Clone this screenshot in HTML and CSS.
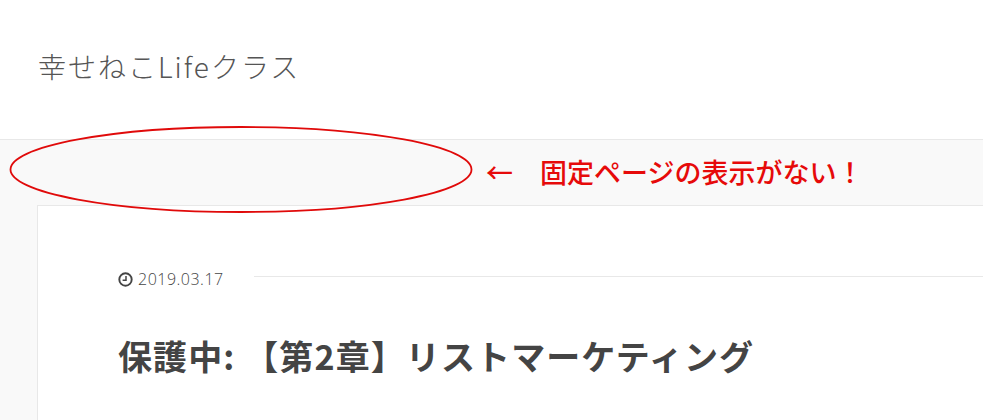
FILE: index.html
```html
<!DOCTYPE html>
<html lang="ja">
  <head>
    <meta charset="utf-8">
    <link rel="stylesheet" href="styles.css">
  </head>
  <body>
    <header class="site-header">
      <h1 class="site-title">幸せねこLifeクラス</h1>
    </header>
    <main class="content">
      <article class="card">
        <div class="post-meta">
          <span class="post-date">
            <svg class="clock" viewBox="0 0 15 15" width="15" height="15">
              <circle cx="7.5" cy="7.5" r="6.2" fill="none" stroke="#444" stroke-width="1.9"/>
              <path d="M8 4V8.2H4.6" fill="none" stroke="#444" stroke-width="1.5"/>
            </svg>
            2019.03.17
          </span>
          <span class="post-rule"></span>
        </div>
        <h2 class="post-title">保護中: 【第2章】リストマーケティング</h2>
      </article>
    </main>

    <!-- red annotation drawn over the screenshot -->
    <svg class="note-ring" viewBox="0 0 983 420" width="983" height="420">
      <ellipse cx="241" cy="169.5" rx="230.5" ry="42.5" fill="none" stroke="#e00a0a" stroke-width="1.8"/>
    </svg>
    <div class="note-text"><span class="note-arrow">←</span>固定ページの表示がない！</div>
  </body>
</html>
```

FILE: styles.css
```css
body {
  font-family: "Open Sans", "Noto Sans CJK JP", sans-serif;
  margin: 0;
  padding: 0;
  height: 420px;
  overflow: hidden;
  background-color: #f9f9f9;
  color: #444;
}

.site-header {
  background-color: #fff;
  border-bottom: 1px solid #e8e8e8;
  height: 139px;
  padding-left: 38px;
}

.site-title {
  margin: 0;
  padding-top: 46px;
  font-family: "Noto Sans CJK JP", sans-serif;
  font-size: 28px;
  line-height: 40px;
  font-weight: 300;
  letter-spacing: 2px;
  color: #555;
}

.content {
  padding: 65px 0 0 37px;
}

.card {
  background-color: #fff;
  border: 1px solid #e8e8e8;
  border-right: none;
  border-bottom: none;
  padding: 60px 0 0 80px;
  height: 154px;
}

.post-meta {
  display: flex;
  align-items: center;
  height: 26px;
}

.post-date {
  display: flex;
  align-items: center;
  gap: 5px;
  font-size: 16px;
  font-weight: 300;
  letter-spacing: 0.5px;
  color: #444;
}

.clock {
  display: block;
}

.post-rule {
  flex-grow: 1;
  height: 1px;
  margin-left: 30px;
  margin-top: -6px;
  background-color: #e8e8e8;
}

.post-title {
  margin: 42px 0 0;
  font-family: "Noto Sans CJK JP", sans-serif;
  font-size: 34px;
  line-height: 44px;
  font-weight: 700;
  letter-spacing: 1.1px;
  color: #444;
}

.note-ring {
  position: absolute;
  left: 0;
  top: 0;
}

.note-text {
  position: absolute;
  left: 486px;
  top: 154px;
  font-family: "Noto Sans CJK JP", sans-serif;
  font-size: 27px;
  line-height: 36px;
  font-weight: 500;
  color: #e60a0a;
  white-space: nowrap;
}

.note-arrow {
  display: inline-block;
  width: 54px;
}
```
